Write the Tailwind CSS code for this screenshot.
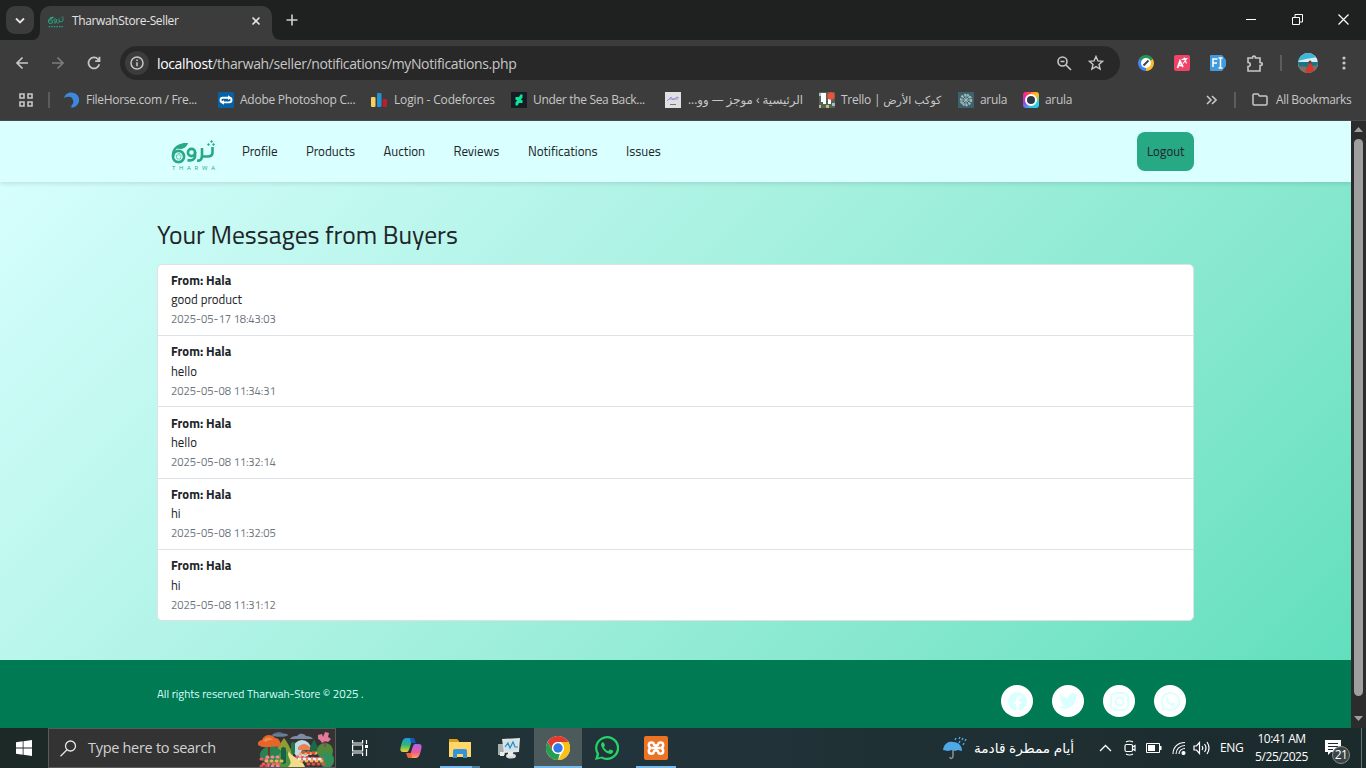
<!DOCTYPE html>
<html lang="en"><head><meta charset="utf-8"><title>TharwahStore-Seller</title>
<script src="https://cdn.jsdelivr.net/npm/@tailwindcss/browser@4"></script></head>
<body class="w-[1366px] h-[768px] overflow-hidden flex flex-col bg-[#3c3c3c] font-['Open_Sans','DejaVu_Sans',sans-serif] text-[12px] text-[#c7c7c7]">
<svg class="hidden"><defs>
<symbol id="wa" viewBox="0 0 24 24"><path fill="currentColor" fill-rule="evenodd" d="M12 0a12 12 0 0 0-10.3 18L0 24l6.200-1.600A12 12 0 1 0 12 0Zm0 2.200a9.800 9.800 0 1 1-5 18.200l-3.800 1 1-3.700A9.800 9.800 0 0 1 12 2.200ZM7.500 6.200C6.300 7 5.700 8.500 6.300 10c1.500 4 4 6.600 8 7.800 1.600.5 3.700-.6 3.900-2.400 0-.5-.1-.6-.6-.9l-2.200-1c-.4-.2-.7-.1-.9.2l-.9 1.100c-.2.3-.5.3-.8.1-1.700-.8-2.900-1.900-3.800-3.400-.2-.3-.1-.5.1-.7l.7-.9c.2-.2.2-.4.1-.7l-1-2.400c-.2-.5-.8-.7-1.400-.6Z"/></symbol>
<symbol id="logo" viewBox="0 0 44 31"><g fill="none" stroke="currentColor" stroke-width="2.600"><circle cx="7" cy="17.500" r="5.600"/><circle cx="20" cy="13.500" r="3.600"/><path d="M1.500 18C1 11 5 7 10 6M23.600 13v3.500c0 4-3 5.500-7.600 4.600M30.500 9v7.500c0 4-2 5.500-5 5M31 17.500h5c3.500 0 5-1 5-4V8"/></g><path fill="currentColor" d="M5 9.500C7 4.500 11 3.500 16.500 4 15 9 11 11 5 9.500M38.500 2.500 40 1 41.500 2.500 40 4ZM35.500 5.500 37 4l1.500 1.500L37 7Zm5 0L42 4l1.500 1.500L42 7Z"/><path d="M4.700 16h5l-.8 4H5.500zM6 14.500h2.500" fill="none" stroke="currentColor" stroke-width=".6"/></symbol>
</defs></svg>

<!-- Tab strip -->
<header class="h-10 bg-[#1f2120] flex items-start shrink-0">
 <div class="ml-[6px] mt-[6px] size-7 rounded-[9px] bg-[#3c3c3c] grid place-items-center text-[#e3e3e3]"><svg width="10" height="7" viewBox="0 0 10 7" fill="none" stroke="currentColor" stroke-width="1.800"><path d="m1 1.500 4 4 4-4"/></svg></div>
 <svg class="self-end" width="6" height="10" viewBox="0 0 6 10"><path fill="#3c3c3c" d="M6 0v10H0Q6 8 6 0"/></svg>
 <div class="mt-[6px] w-[232px] h-[34px] rounded-t-[10px] bg-[#3c3c3c] flex items-center pl-2 pb-[4px] text-[#e3e3e3]">
  <svg class="text-[#27a985]" width="16" height="13" viewBox="0 0 44 34"><use href="#logo" width="44" height="31"/><path stroke="currentColor" stroke-width="3" stroke-dasharray="4 3" d="M2 31h40"/></svg>
  <span class="ml-2 w-[184px] whitespace-nowrap tracking-[-0.370px]">TharwahStore-Seller</span>
  <svg class="-ml-[5px] shrink-0" width="10" height="10" viewBox="0 0 10 10" stroke="currentColor" stroke-width="1.600"><path d="m1.500 1.500 7 7m0-7-7 7"/></svg>
 </div>
 <svg class="self-end" width="10" height="10" viewBox="0 0 10 10"><path fill="#3c3c3c" d="M0 0v10h10Q0 10 0 0"/></svg>
 <svg class="ml-[4px] mt-[14px]" width="12" height="12" viewBox="0 0 12 12" stroke="#d0d0d0" stroke-width="1.600"><path d="M6 .5v11M.5 6h11"/></svg>
 <div class="ml-auto mr-[17px] mt-[14px] flex gap-[35px] items-center">
  <svg width="11" height="11" stroke="#fff"><path d="M0 5.500h10"/></svg>
  <svg width="11" height="11" viewBox="0 0 11 11" fill="none" stroke="#fff"><path d="M.5 3.500h7v7h-7zM3 3V.500h7.500V8H8"/></svg>
  <svg width="11" height="11" viewBox="0 0 11 11" stroke="#fff" stroke-width="1.200"><path d="m.5.5 10 10m0-10-10 10"/></svg>
 </div>
</header>

<!-- Address bar -->
<div class="h-[46px] shrink-0 flex items-center">
 <div class="w-[120px] flex pl-[15px] gap-[22px] items-center text-[#c7c7c7]">
  <svg width="14" height="14" viewBox="0 0 14 14" fill="none" stroke="currentColor" stroke-width="1.700"><path d="M13 7H2m5.500-5.500L2 7l5.500 5.500"/></svg>
  <svg class="text-[#7c7c7c]" width="14" height="14" viewBox="0 0 14 14" fill="none" stroke="currentColor" stroke-width="1.700"><path d="M1 7h11M6.500 1.500 12 7l-5.500 5.500"/></svg>
  <svg width="14" height="14" viewBox="0 0 14 14" fill="none" stroke="currentColor" stroke-width="1.700"><path d="M12.300 8.300A5.500 5.500 0 1 1 11 3.200L12.500 5M12.500.800V5.200H8.200"/></svg>
 </div>
 <div class="w-[1000px] h-[34px] rounded-full bg-[#282828] flex items-center pl-[5px] text-[14px]">
  <div class="size-6 shrink-0 rounded-full bg-[#3c3c3c] grid place-items-center"><svg width="14" height="14" viewBox="0 0 14 14" fill="none" stroke="#c7c7c7" stroke-width="1.500"><circle cx="7" cy="7" r="6"/><path d="M7 6.200v4M7 3.600v1.500"/></svg></div>
  <span class="ml-2 w-[900px] shrink-0 whitespace-nowrap tracking-[-0.370px]"><span class="text-white">localhost</span>/tharwah/seller/notifications/myNotifications.php</span>
  <svg class="shrink-0" width="15" height="15" viewBox="0 0 15 15" fill="none" stroke="#c7c7c7" stroke-width="1.600"><circle cx="5.500" cy="5.500" r="4.500"/><path d="m9 9 5 5M3.500 5.500h4"/></svg>
  <svg class="ml-[16px] shrink-0" width="16" height="16" viewBox="0 0 16 16" fill="none" stroke="#c7c7c7" stroke-width="1.400"><path d="m8 1.500 1.900 4.400 4.700.4-3.600 3.100 1.100 4.600L8 11.600 3.900 14 5 9.400 1.400 6.300l4.700-.4Z"/></svg>
 </div>
 <div class="flex items-center ml-[18px]">
  <svg width="16" height="16" viewBox="0 0 16 16"><path fill="#24965a" d="M1.100 4A8 8 0 0 1 14.900 4L8 8Z"/><path fill="#fbbc2a" d="M14.900 4A8 8 0 0 1 8 16V8Z"/><path fill="#4286f4" d="M8 16A8 8 0 0 1 1.100 4L8 8Z"/><circle cx="8" cy="8" r="5" fill="#fff"/><path stroke="#444" stroke-width="2" d="m5.500 10.500 5-5"/></svg>
  <svg class="ml-5" width="16" height="16" viewBox="0 0 16 16"><rect width="16" height="16" rx="2" fill="#ef4468"/><path d="m3.500 13 2.500-7 3 6M4.500 10.500h3.500" fill="none" stroke="#fff" stroke-width="1.700"/><path d="m7.500 4.500 6-1M10 2.500l2.500 6M12.500 4 9 8.500" fill="none" stroke="#fff" stroke-width="1.100"/></svg>
  <svg class="ml-5" width="16" height="16" viewBox="0 0 16 16"><path fill="#419bdc" d="M1 0h11l4 5v6l-4 5H1q-1 0-1-1V1q0-1 1-1"/><path d="M3 12V4h4.500M3 8h4M8.500 3h4M8.500 13h4M10.500 3v10" fill="none" stroke="#fff" stroke-width="1.500"/></svg>
  <svg class="ml-[21px]" width="17" height="17" viewBox="0 0 17 17" fill="none" stroke="#c7c7c7" stroke-width="1.600"><path d="M1 3h4.500c0-2.500 3-2.500 3 0H13v4.500c3 0 3 3 0 3V16H1v-4.500c3 0 3-4 0-4Z"/></svg>
  <div class="w-0.5 h-4 bg-[#5c5c5c] ml-4"></div>
  <svg class="ml-4" width="20" height="20" viewBox="0 0 20 20"><clipPath id="av"><circle cx="10" cy="10" r="10"/></clipPath><g clip-path="url(#av)"><path fill="#d9eef2" d="M0 0h20v20H0z"/><path fill="#3fb5d8" d="M0 0h20v4L8 6 0 8Z"/><path fill="#1b7387" d="M0 9h20v11H0z"/><path fill="#80705c" d="m0 13 10 1 10-2v8H0z"/><path fill="#d03a2c" d="m10 13 1-3h2l2 4 2 6H7l1-4Z"/><circle cx="12" cy="9" r="1.500" fill="#70382c"/></g></svg>
  <svg class="ml-6" width="4" height="14" viewBox="0 0 4 14" fill="#c7c7c7"><circle cx="2" cy="2" r="1.600"/><circle cx="2" cy="7" r="1.600"/><circle cx="2" cy="12" r="1.600"/></svg>
 </div>
</div>

<!-- Bookmarks -->
<nav class="h-[35px] shrink-0 flex items-center pb-[7px] whitespace-nowrap border-b border-[#4a4a4a]">
 <svg class="ml-[19px]" width="14" height="14" viewBox="0 0 14 14" fill="none" stroke="#c7c7c7" stroke-width="1.600"><path d="M1 1h4v4H1zM9 1h4v4H9zM1 9h4v4H1zM9 9h4v4H9z"/></svg>
 <div class="ml-[15px] w-0.5 h-4 bg-[#5c5c5c]"></div>
 <div class="ml-[14px] w-[154px] flex items-center gap-[6px]"><svg width="16" height="16" viewBox="0 0 16 16"><path fill="#3d87dc" d="M0 6C2-1 11-1 14 4c3 5 0 11-7 12l1-2-2 .5C10 12 10 9 8 6 5 4 3 5 0 6"/></svg><span class="tracking-[-0.300px]">FileHorse.com / Fre...</span></div>
 <div class="w-[153px] flex items-center gap-[6px]"><svg width="16" height="16" viewBox="0 0 16 16"><rect width="16" height="16" rx="1.500" fill="#0861a5"/><rect x="2.500" y="5.800" width="11" height="4.600" rx="2.300" fill="none" stroke="#fff" stroke-width="1.900"/><path fill="#fff" d="m10 3.300 3.500 2.500L10 8zM6 8l-3.500 2.400L6 12.800z"/></svg><span class="tracking-[-0.250px]">Adobe Photoshop C...</span></div>
 <div class="w-[140px] flex items-center gap-[7px]"><svg width="16" height="16" viewBox="0 0 16 16"><rect y="5" width="4.500" height="10" rx="1" fill="#f7d15c"/><rect x="6" y="1" width="4.500" height="14" rx="1" fill="#2493d1"/><rect x="11.500" y="7" width="4.500" height="8" rx="1" fill="#b91e2c"/></svg><span class="tracking-[-0.160px]">Login - Codeforces</span></div>
 <div class="w-[154px] flex items-center gap-[6px]"><svg width="16" height="16" viewBox="0 0 16 16"><path fill="#171c24" d="M0 0h16v16H0z"/><path fill="#0be59a" d="M11.500 2.500v3L9.700 8h1.800v3H8l-1.300 2.500H4.500v-3L6.300 8H4.500V5H8l1.300-2.500Z"/></svg><span class="tracking-[-0.330px]">Under the Sea Back...</span></div>
 <div class="w-[154px] flex items-center gap-[7px]"><svg width="16" height="16" viewBox="0 0 16 16"><path fill="#e0e0e2" d="M0 0h16v16H0z"/><path d="m2 9 4-4 2 3 4-3 2 1M4 7h9" fill="none" stroke="#8f95d4"/><path stroke="#777" d="M5 12.500h6"/></svg><span class="text-[11.800px]" dir="rtl">الرئيسية › موجز — وو...</span></div>
 <div class="w-[139px] flex items-center gap-[6px]"><svg width="16" height="16" viewBox="0 0 16 16"><path fill="#536450" d="M0 0h16v16H0z"/><path fill="#fff" d="M2 1h5v11H4v-2H2zM9 7h3v5H9z"/><path fill="#a8b9d0" d="M0 1h2v3H0zM13 11h3v3h-3z"/><path fill="#c9b78b" d="M0 13h2v3H0zm7 0h3v3H7z"/><circle cx="12" cy="4" r="3.700" fill="#eb5040"/></svg><span class="text-[11.100px]"><span class="text-[12px] tracking-[-0.250px]">Trello |</span> كوكب الأرض</span></div>
 <div class="w-[65px] flex items-center gap-[6px]"><svg width="16" height="16" viewBox="0 0 16 16"><path fill="#3b626b" d="M0 0h16v16H0z"/><circle cx="8" cy="8" r="5" fill="none" stroke="#9bb4b8" stroke-width="2.500" stroke-dasharray="2 1"/><path d="M8 2v12M2 8h12M4 4l8 8M12 4l-8 8" stroke="#b2c6c8" stroke-width=".8"/></svg><span class="tracking-[-0.300px]">arula</span></div>
 <div class="flex items-center gap-[6px]"><div class="size-4 rounded-[3px] bg-[conic-gradient(#ff8a28,#ffc21e_50deg,#27d2dc_110deg,#31bbec_190deg,#a43be8_250deg,#f120a8_300deg,#ff5833)] grid place-items-center"><div class="size-3 rounded-full bg-[#2c3945] border-2 border-white"></div></div><span class="tracking-[-0.300px]">arula</span></div>
 <div class="ml-auto mr-[14px] flex items-center"><svg width="11" height="10" viewBox="0 0 11 10" fill="none" stroke="#c7c7c7" stroke-width="1.600"><path d="m1 1 4 4-4 4m5-8 4 4-4 4"/></svg><div class="ml-[17px] w-0.5 h-4 bg-[#5c5c5c]"></div><svg class="ml-4" width="16" height="13" viewBox="0 0 16 13" fill="none" stroke="#c7c7c7" stroke-width="1.500"><path d="M1 11V2q0-1 1-1h4l1.500 2H14q1 0 1 1v7q0 1-1 1H2q-1 0-1-1Z"/></svg><span class="ml-2 w-[76px] tracking-[-0.360px]">All Bookmarks</span></div>
</nav>

<!-- Page -->
<div class="h-[607px] shrink-0 flex">
 <div class="w-[1351px] flex flex-col bg-linear-135 from-[#d9ffff] to-[#5bdebb] font-['Titillium_Web',Roboto,sans-serif] text-[#212529] text-[12.800px]">
  <div class="relative h-[61px] shrink-0 bg-[#d9ffff] shadow-[0_2px_4px_rgba(0,0,0,.1)] flex items-start pl-[171px] whitespace-nowrap text-[13px]">
   <div class="mt-[18px] w-[71px] text-[#27a985]"><svg width="45" height="25" viewBox="0 0 44 25"><use href="#logo" width="44" height="31"/></svg><div class="flex justify-between w-[43px] text-[6px] leading-[8px] ml-px font-['Open_Sans'] font-medium"><span>T</span><span>H</span><span>A</span><span>R</span><span>W</span><span>A</span></div></div>
   <div class="flex mt-[20px] leading-[21px]">
   <span class="w-16">Profile</span><span class="w-[77.500px]">Products</span><span class="w-[70px]">Auction</span><span class="w-[74.500px]">Reviews</span><span class="w-[98px]">Notifications</span><span class="w-[40px]">Issues</span></div>
   <div class="ml-auto mr-[157px] mt-[11px] w-[57px] h-[39px] rounded-[8px] bg-[#27a985] flex items-center pl-[10px] text-[12.800px]">Logout</div>
  </div>
  <main class="h-[478px] shrink-0 px-[157px] pt-[35px]">
   <h1 class="text-[25.600px] leading-[36px] whitespace-nowrap">Your Messages from Buyers</h1>
   <ul class="mt-[11px] w-[1037px] h-[357px] bg-white rounded-[5px] border border-[#dee2e6] divide-y divide-[#dee2e6] grid grid-rows-[71px_71px_72px_71px_70px] whitespace-nowrap">
    <li class="pl-[13px] pt-[6px] leading-[19.300px]"><div class="font-bold">From: Hala</div><div>good product</div><div class="text-[11.200px] leading-[18px] text-[#6c757d]">2025-05-17 18:43:03</div></li>
    <li class="pl-[13px] pt-[5px] leading-[20px]"><div class="font-bold">From: Hala</div><div>hello</div><div class="text-[11.200px] leading-[19px] text-[#6c757d]">2025-05-08 11:34:31</div></li>
    <li class="pl-[13px] pt-[7px] leading-[19.300px]"><div class="font-bold">From: Hala</div><div>hello</div><div class="text-[11.200px] leading-[18px] text-[#6c757d]">2025-05-08 11:32:14</div></li>
    <li class="pl-[13px] pt-[6px] leading-[19.300px]"><div class="font-bold">From: Hala</div><div>hi</div><div class="text-[11.200px] leading-[18px] text-[#6c757d]">2025-05-08 11:32:05</div></li>
    <li class="pl-[13px] pt-[5px] leading-[20px]"><div class="font-bold">From: Hala</div><div>hi</div><div class="text-[11.200px] leading-[19px] text-[#6c757d]">2025-05-08 11:31:12</div></li>
   </ul>
  </main>
  <footer class="flex-1 bg-[#007a53] flex items-start justify-between pl-[157px] pr-[165px] pt-[25px]">
   <span class="text-[11.520px] leading-[18px] text-[#d9ffff]">All rights reserved Tharwah-Store © 2025 .</span>
   <div class="flex gap-[19px] text-[#d9ffff]">
    <div class="size-8 rounded-full bg-white grid place-items-center"><svg width="19" height="19" viewBox="0 0 20 20"><circle cx="10" cy="10" r="10" fill="currentColor"/><path fill="#fff" d="M8.500 20v-7H6v-3h2.500V8C8.500 5.500 10 4 12.300 4l2 .2v2.500h-1.200C12 6.700 11.500 7.300 11.500 8v2h2.700l-.5 3h-2.200v7Z"/></svg></div>
    <div class="size-8 rounded-full bg-white grid place-items-center"><svg width="19" height="16" viewBox="0 0 24 20"><path fill="currentColor" d="M24 2.300c-.9.400-1.800.7-2.800.8 1-.6 1.800-1.600 2.200-2.700-1 .6-2 1-3.100 1.200a5 5 0 0 0-8.400 4.500C7.800 5.900 4.200 4 1.700.900.400 3.200 1.100 6 3.200 7.500c-.8 0-1.600-.3-2.200-.6 0 2.300 1.600 4.400 3.900 4.900-.7.200-1.500.2-2.200.1.600 2 2.400 3.400 4.600 3.400A10 10 0 0 1 0 17.300 14 14 0 0 0 21.500 4.800c1-.7 1.800-1.600 2.500-2.500Z"/></svg></div>
    <div class="size-8 rounded-full bg-white grid place-items-center"><svg width="19" height="19" viewBox="0 0 20 20" fill="none" stroke="currentColor" stroke-width="2"><rect x="1" y="1" width="18" height="18" rx="5"/><circle cx="10" cy="10" r="4.200"/><circle cx="15.300" cy="4.700" r=".3"/></svg></div>
    <div class="size-8 rounded-full bg-white grid place-items-center"><svg width="19" height="19"><use href="#wa"/></svg></div>
   </div>
  </footer>
 </div>
 <div class="w-[15px] bg-[#2c2c2c] flex flex-col items-center justify-between pt-[6px] pb-[7px]">
  <svg width="9" height="5"><path fill="#9f9f9f" d="M0 5 4.500 0 9 5"/></svg><div class="w-[9px] h-[557px] mt-[7px] mb-auto rounded-full bg-[#9f9f9f]"></div><svg width="9" height="5"><path fill="#9f9f9f" d="M0 0 4.500 5 9 0"/></svg>
 </div>
</div>

<!-- Taskbar -->
<footer class="h-10 shrink-0 bg-linear-to-r from-[#1c2926] via-[#22343b] via-45% to-[#1b2a2b] flex items-stretch text-white whitespace-nowrap">
 <div class="w-12 grid place-items-center"><svg width="16" height="16" viewBox="0 0 16 16" fill="#fff"><path d="m0 2.300 6.700-1v6.300H0zM7.500 1.200 16 0v7.600H7.500zM0 8.400h6.700v6.300l-6.700-1zM7.500 8.400H16V16l-8.500-1.200z"/></svg></div>
 <div class="w-72 bg-[#333] border border-[#5a5a5a] flex items-center pl-[11px] text-[14.500px] text-[#d2d2d2]">
  <svg class="shrink-0" width="17" height="17" viewBox="0 0 17 17" fill="none" stroke="#e6e6e6" stroke-width="1.300"><circle cx="10.500" cy="6" r="5"/><path d="m7 9.700-6.500 6.500"/></svg>
  <span class="ml-[11px] w-[170px] shrink-0 tracking-[-0.300px]">Type here to search</span>
  <svg class="shrink-0" width="76" height="38" viewBox="0 0 76 38">
   <ellipse cx="22" cy="6" rx="8" ry="1.800" fill="#6b7c95"/><path fill="#5c6c86" d="M15 5q6-4 11 0z"/><path fill="#7d8ca3" d="M32 10c2-3 5-3 7-3 3-4 8-2 9 0 3 0 6 1 7 3z"/>
   <circle cx="44" cy="20" r="9" fill="#bfdbe8"/><path fill="#8f9d32" d="M14 26 26 9q5 6 9 17v10H14Z"/><ellipse cx="13" cy="26" rx="11" ry="9" fill="#278350"/><path fill="#1c6948" d="m49 25 7-15 7 15Zm-7 0 5-9 6 9Z"/>
   <circle cx="67" cy="22" r="8" fill="#51883b"/><ellipse cx="69" cy="31" rx="7" ry="8" fill="#34905b"/><path fill="#4a963f" d="M20 38V26q7-8 14 0l3 12Z"/>
   <path stroke="#73351f" stroke-width="2" d="M11 14v14"/><path fill="#e5662c" d="M0 16c-1-4 3-5 4-5 2-5 9-7 13-2 4 0 5 3 6 7-4 3-8 1-11 2-4 0-8 1-12-2Z"/><path fill="#f48c46" d="M5 11q6-5 10 0-5-1-7 2z"/>
   <path stroke="#8c4059" stroke-width="1.500" d="M67 18V8"/><path fill="#e7799b" d="m60 6 4-1 1 3 2-5 4 1-1 4 3 2-3 3-3-1-3 2-2-3-2-1Z"/>
   <rect x="23" y="18" width="5" height="17" rx="2.500" fill="#166147"/><rect x="33" y="13" width="4" height="12" rx="2" fill="#24784a"/>
   <path fill="#f2dc8b" d="M30 38c7-7-3-9 1-16 1 6 13 7 16 16Z"/><path fill="#e98251" d="M40 18q6-6 12 0v3H40z"/>
   <g fill="none" stroke-width="3" stroke-linecap="round" stroke-dasharray="1 4"><path stroke="#ef5c73" d="M5 35h20M39 28l25 2M3 30h10"/><path stroke="#f5b04e" d="M8 32h16M43 32h24M42 25l18-1"/><path stroke="#f6e9df" d="M41 30h24"/><path stroke="#f18a98" d="M9 28h12M9 37h14"/><path stroke="#e94b49" d="M50 35h18M45 23l12 1M3 37h6"/></g>
  </svg>
 </div>
 <div class="w-12 grid place-items-center"><svg width="16" height="16" viewBox="0 0 16 16" fill="none" stroke="#fff" stroke-width="1.200"><path d="M.6 0v3h10V0M.6 16v-3h10v3M.6 5h10v6H.6zM14.500 0v4M14.500 9v7"/><path fill="#fff" stroke="none" d="M13 5h3v3h-3z"/></svg></div>
 <div class="w-[54px] grid place-items-center"><svg width="22" height="20" viewBox="0 0 22 20"><defs><linearGradient id="c1" x2="0" y2="1"><stop stop-color="#189ae8"/><stop offset=".5" stop-color="#32b76e"/><stop offset="1" stop-color="#efd233"/></linearGradient><linearGradient id="c2" x2="0" y2="1"><stop stop-color="#aa63ef"/><stop offset=".6" stop-color="#f25998"/><stop offset="1" stop-color="#ffa348"/></linearGradient></defs><path fill="url(#c1)" d="M6 0h8c-3 1-4 14-7 14H3c-3 0-3-3-2-6C2 4 3 0 6 0"/><path fill="#1855bc" d="M10 0h3c2 0 2 3 3 5h-5Z"/><path fill="url(#c2)" d="M16 20H8c3-1 4-14 7-14h4c3 0 3 3 2 6-1 4-2 8-5 8"/><path fill="#ee643e" d="M12 20H9c-2 0-2-3-3-5h5Z"/></svg></div>
 <div class="ml-[2px] w-10 flex flex-col items-center justify-end"><svg class="mb-[8px]" width="22" height="19" viewBox="0 0 22 19"><path fill="#dba018" d="M0 0h8l2 2v4H0z"/><path fill="#ffd667" d="M0 3h22v15H0z"/><path fill="#3593da" d="M4 19v-7q0-2 2-2h10q2 0 2 2v7h-4v-4H8v4z"/></svg><div class="h-0.5 w-10 bg-[#76b9ed] border-r-8 border-[#4f7b9c]"></div></div>
 <div class="ml-px w-[53px] pl-[3px] grid place-items-center"><svg width="24" height="21" viewBox="0 0 24 21"><path fill="#a6afae" d="M1 6h7v11H1z"/><path fill="#e2e4e2" d="m5 1 18-1-1 14-15 1Z"/><path fill="#c6e4f3" d="m7 3 14-1-1 10-12 1Z"/><path d="m8 9 3-4 2 5 3-6 2 5h3" fill="none" stroke="#3b83aa" stroke-width="1.200"/><ellipse cx="14" cy="18" rx="5" ry="2.500" fill="#d9dddd"/><path fill="#e9eceb" d="M3 14h4v4H3zM11 14h5v4h-5z"/></svg></div>
 <div class="w-12 bg-[#4c5a5b] border-b-2 border-[#76b9ed] grid place-items-center pt-[2px]"><svg width="24" height="24" viewBox="0 0 24 24"><circle cx="12" cy="12" r="12" fill="#fff"/><path fill="#e23b2e" d="M1.600 6A12 12 0 0 1 22.400 6H12a6 6 0 0 0-5.200 9Z"/><path fill="#fbc116" d="M22.400 6A12 12 0 0 1 12 24l5.200-9A6 6 0 0 0 17 8.500L15 6Z"/><path fill="#269d50" d="M12 24A12 12 0 0 1 1.600 6l5.200 9a6 6 0 0 0 7 2.700Z"/><circle cx="12" cy="12" r="6" fill="#fff"/><circle cx="12" cy="12" r="4.700" fill="#3478e8"/></svg></div>
 <div class="w-[50px] grid place-items-center text-[#25d366]"><svg width="24" height="24"><use href="#wa"/></svg></div>
 <div class="ml-1 w-10 flex flex-col items-center justify-between pt-[8px]"><svg width="24" height="24" viewBox="0 0 24 24"><rect width="24" height="24" rx="2" fill="#ec7323"/><path d="M10 9C10 5.500 4.800 5.500 4.800 9c0 2 1.200 3 3 3-1.800 0-3 1-3 3 0 3.500 5.200 3.500 5.200 0M14 9c0-3.500 5.200-3.500 5.200 0 0 2-1.200 3-3 3 1.800 0 3 1 3 3 0 3.500-5.200 3.500-5.200 0M8 12h8M9.500 8.500q2.500 2 5 0M9.500 15.500q2.500-2 5 0" fill="none" stroke="#fff" stroke-width="2.500"/></svg><div class="h-0.5 w-full bg-[#76b9ed]"></div></div>
 <div class="ml-auto flex items-center">
  <svg width="24" height="24" viewBox="0 0 24 24"><path fill="#4ea9e8" d="M0 14C1 7 6 5 10 6c6 0 9 4 9 9l-4-1-3 1-3-1-4 1Z"/><path d="M10 13v7c0 3-3 3-3 1" fill="none" stroke="#8d9598" stroke-width="1.500"/><path d="m13 2-1 2m5-3-1 2m4-1-1 2m4-1-1 2m-1 2-1 2m-3-4-1 2" stroke="#4ea9e8" stroke-width="1.400"/></svg>
  <span class="ml-[6px] w-[101px] text-[13.700px]" dir="rtl">أيام ممطرة قادمة</span>
  <svg class="ml-[25px]" width="13" height="8" viewBox="0 0 13 8" fill="none" stroke="#fff" stroke-width="1.300"><path d="m1 7 5.500-5.500L12 7"/></svg>
  <svg class="ml-[12px]" width="12" height="16" viewBox="0 0 12 16" fill="none" stroke="#fff" stroke-width="1.200"><rect x="1" y="4.500" width="7.500" height="7" rx="1.500"/><path d="m8.500 7 2.500-1.500v5L8.500 9M2 2q3.500-2 7 0M2 14q3.500 2 7 0"/></svg>
  <svg class="ml-[10px]" width="16" height="10" viewBox="0 0 16 10"><path fill="none" stroke="#fff" d="M.5.500h13v9H.5z"/><path fill="#fff" d="M2 2h7v6H2zM14 3h1.500v4H14z"/></svg>
  <svg class="ml-[10px]" width="14" height="14" viewBox="0 0 14 14" fill="none" stroke="#fff" stroke-width="1.100"><path d="M1 13C1 6 6 1.500 13 1.500M4 13c0-5 4-8.500 9-8.500M7 13c0-3.500 3-5.500 6-5.500"/><circle cx="11.500" cy="12" r="1.500" fill="#fff"/></svg>
  <svg class="ml-[7px]" width="17" height="14" viewBox="0 0 17 14" fill="none" stroke="#fff" stroke-width="1.200"><path d="M1 5h2.500l3-3.500v11L3.500 9H1zM9 5q1.500 2 0 4M11.500 3q3 4 0 8M14 1q4 6 0 12"/></svg>
  <span class="ml-[10px] w-[23px] tracking-[-0.400px]">ENG</span>
  <div class="ml-[12px] w-[53px] flex flex-col items-center leading-[18px]"><span class="tracking-[-0.500px]">10:41 AM</span><span class="tracking-[-0.450px]">5/25/2025</span></div>
  <div class="relative ml-[17px] w-[36px] h-10 pt-[12px]"><svg width="17" height="16" viewBox="0 0 17 16"><path fill="#fff" d="M0 0h16v12H6l-3 3v-3H0z"/><path stroke="#1d2b2c" d="M3 3.500h10M3 6.500h10M3 9.500h5"/></svg><div class="absolute left-[7px] top-[18px] size-[18px] rounded-full bg-[#3b4444] border border-[#8a9090] grid place-items-center text-[12px] leading-none tracking-[-0.5px]">21</div></div>
  <div class="w-[5px] h-full border-l border-[#66706f]"></div>
 </div>
</footer>
</body></html>
